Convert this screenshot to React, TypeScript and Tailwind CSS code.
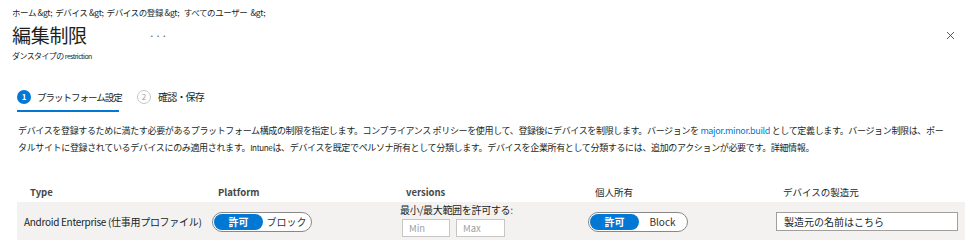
import { X } from "lucide-react";

const font = { fontFamily: '"Noto Sans CJK JP", "Noto Sans", sans-serif' };

function Toggle({ left, right }: { left: string; right: string }) {
  return (
    <div className="flex h-[20px] w-[100px] items-center rounded-full border border-[#8a8886] bg-white p-[1px]">
      <span className="flex h-full w-[49px] items-center justify-center rounded-full bg-[#0078d4] text-[10px] font-semibold leading-none text-white">
        {left}
      </span>
      <span className="flex h-full flex-1 items-center justify-center text-[10px] leading-none text-[#323130]">
        {right}
      </span>
    </div>
  );
}

export default function App() {
  return (
    <div className="h-[242px] w-[975px] overflow-hidden bg-white text-[#323130]" style={font}>
      <div className="whitespace-nowrap px-[12px] pt-[4px] text-[8.5px] leading-[16px] tracking-[-0.4px] text-[#201f1e]">
        ホーム &amp;gt;&nbsp; デバイス &amp;gt;&nbsp; デバイスの登録 &amp;gt;&nbsp;&nbsp; すべてのユーザー&nbsp; &amp;gt;
      </div>

      <div className="flex items-center justify-between pl-[12px] pr-[18px]">
        <div className="flex items-center">
          <h1 className="text-[19px] leading-[30px] tracking-[-0.3px] text-[#201f1e]">編集制限</h1>
          <span className="ml-[62px] text-[11px] leading-none text-[#605e5c]">···</span>
        </div>
        <X className="h-[13px] w-[13px] text-[#323130]" strokeWidth={1.5} />
      </div>
      <div className="whitespace-nowrap px-[12px] text-[8px] leading-[12px] tracking-[-0.6px] text-[#201f1e]">
        ダンスタイプの <span className="text-[7px]">restriction</span>
      </div>

      <div className="mt-[27px] flex items-end whitespace-nowrap pl-[17px]">
        <div className="flex w-[102px] flex-col">
          <div className="flex items-center gap-[6px]">
            <span className="flex h-[14px] w-[14px] shrink-0 items-center justify-center rounded-full bg-[#0078d4] text-[8px] font-bold leading-none text-white">
              1
            </span>
            <span className="text-[9.5px] leading-[16px] tracking-[-1px] text-[#201f1e]">プラットフォーム設定</span>
          </div>
          <div className="mt-[5px] h-[2px] w-full bg-[#0078d4]" />
        </div>
        <div className="mb-[7px] ml-[18px] flex items-center gap-[7px]">
          <span className="flex h-[14px] w-[14px] shrink-0 items-center justify-center rounded-full border border-[#c8c6c4] text-[8px] leading-none text-[#a19f9d]">
            2
          </span>
          <span className="text-[10px] leading-[16px] tracking-[-0.8px] text-[#201f1e]">確認・保存</span>
        </div>
      </div>

      <div className="mt-[10px] whitespace-nowrap px-[18px] text-[9px] leading-[17px] tracking-[-0.35px] text-[#201f1e]">
        <div className="h-[17px]">
          デバイスを登録するために満たす必要があるプラットフォーム構成の制限を指定します。コンプライアンス ポリシーを使用して、登録後にデバイスを制限します。バージョンを{" "}
          <span className="text-[#0078d4]">major.minor.build</span> として定義します。バージョン制限は、ポー
        </div>
        <div className="h-[17px]">
          タルサイトに登録されているデバイスにのみ適用されます。<span className="text-[8px]">Intune</span>は、デバイスを既定でペルソナ所有として分類します。デバイスを企業所有として分類するには、追加のアクションが必要です。詳細情報。
        </div>
      </div>

      <div className="mx-[17px] mt-[26px] w-[948px]">
        <div className="grid h-[20px] grid-cols-[188px_188px_189px_189px_1fr] items-center text-[9.5px] font-semibold leading-[14px] text-[#484644]">
          <div className="pl-[13px]">Type</div>
          <div className="pl-[13px]">Platform</div>
          <div className="pl-[13px]">versions</div>
          <div className="pl-[13px] font-normal text-[#201f1e]">個人所有</div>
          <div className="pl-[12px] font-normal text-[#201f1e]">デバイスの製造元</div>
        </div>
        <div className="grid h-[38px] grid-cols-[188px_188px_189px_189px_1fr] items-center bg-[#f3f2f1] text-[10px]">
          <div className="whitespace-nowrap pl-[7px] tracking-[-0.3px] text-[#201f1e]">Android Enterprise (仕事用プロファイル)</div>
          <div className="pl-[7px] pt-[1px]">
            <Toggle left="許可" right="ブロック" />
          </div>
          <div className="flex flex-col items-start pb-[2px] pl-[7px]">
            <span className="whitespace-nowrap text-[10px] leading-[14px] tracking-[-0.3px] text-[#201f1e]">
              最小/最大範囲を許可する<span className="text-[#0078d4]">:</span>
            </span>
            <div className="mt-[2px] flex gap-[6px] pl-[2px]">
              <div className="flex h-[18px] w-[48px] items-center border border-[#c8c6c4] bg-white pl-[6px] text-[9.5px] text-[#a19f9d]">Min</div>
              <div className="flex h-[18px] w-[49px] items-center border border-[#c8c6c4] bg-white pl-[6px] text-[9.5px] text-[#a19f9d]">Max</div>
            </div>
          </div>
          <div className="pl-[6px] pt-[2px]">
            <Toggle left="許可" right="Block" />
          </div>
          <div className="pl-[5px] pr-[7px]">
            <div className="flex h-[19px] w-[182px] items-center border border-[#a19f9d] bg-white pl-[7px] text-[10px] text-[#201f1e]">
              製造元の名前はこちら
            </div>
          </div>
        </div>
      </div>
    </div>
  );
}
